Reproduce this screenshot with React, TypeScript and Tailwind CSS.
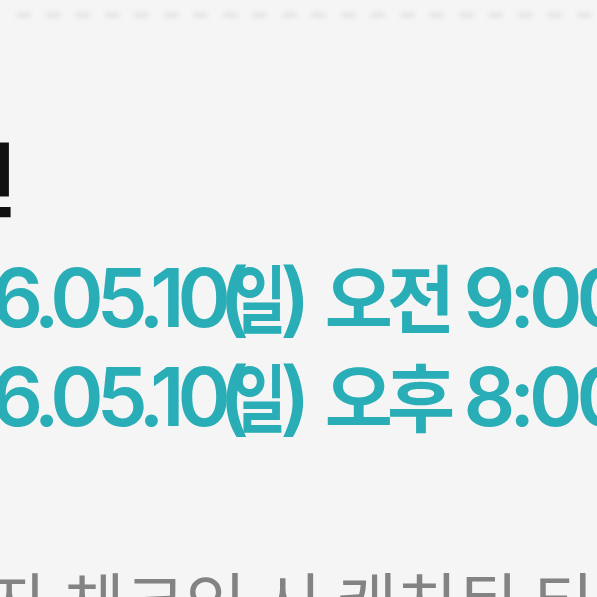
import React from "react";

const dots = Array.from({ length: 20 });

function TimeLine({ ampm, time }: { ampm: string; time: string }) {
  return (
    <div className="h-[99px] whitespace-nowrap leading-[99px] ml-[-142px] text-[#29adb6]">
      <span className="text-[81px] font-semibold tracking-[-7px] [font-family:Inter,'Noto_Sans_CJK_KR',sans-serif]">
        2026.05.10
      </span>
      <span className="-ml-[5px] text-[81px] font-semibold tracking-[-7px] [font-family:Inter,sans-serif]">
        (
      </span>
      <span className="inline-block w-[48px] -ml-[10px] origin-left scale-x-[0.8] text-[74px] font-semibold leading-none [font-family:'Noto_Sans_CJK_KR',sans-serif]">
        일
      </span>
      <span className="text-[81px] font-semibold tracking-[-3px] [font-family:Inter,sans-serif]">
        ){" "}
      </span>
      <span className="text-[74px] font-semibold leading-none tracking-[-6px] [font-family:'Noto_Sans_CJK_KR',sans-serif]">
        {ampm}
      </span>
      <span className="text-[81px] font-semibold tracking-[-6px] [font-family:Inter,sans-serif]">
        {" "}
        {time}
      </span>
    </div>
  );
}

export default function App() {
  return (
    <div className="w-[597px] h-[597px] overflow-hidden bg-[#f5f5f5] flex flex-col">
      {/* faint ticket perforation strip */}
      <div className="flex gap-[14.5px] pl-[16px] pt-[12px] h-[30px] shrink-0">
        {dots.map((_, i) => (
          <div key={i} className="w-[15px] h-[6px] shrink-0 rounded-full bg-[#e6e6e6] blur-[2px]" />
        ))}
      </div>

      <div className="mt-[95px] h-[100px] shrink-0 whitespace-nowrap ml-[-204px] text-[80px] font-black leading-[100px] text-[#111] [font-family:'Noto_Sans_CJK_KR',sans-serif]">
        체크인
      </div>

      <div className="mt-[24px] shrink-0">
        <TimeLine ampm="오전" time="9:00" />
        <TimeLine ampm="오후" time="8:00" />
      </div>

      <div className="mt-[112px] shrink-0 whitespace-nowrap ml-[-133px] text-[66px] leading-[80px] text-[#838383] [font-family:'Noto_Sans_CJK_KR',sans-serif]">
        예약자 체크인 시 캐치된 티켓
      </div>
    </div>
  );
}
